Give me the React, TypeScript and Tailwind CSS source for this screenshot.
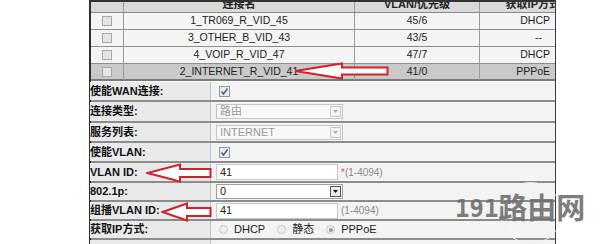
import React from "react";

const font = "font-['Liberation_Sans','Noto_Sans_CJK_SC',sans-serif]";

function Arrow({ w, h, head, shaft, className }: { w: number; h: number; head: number; shaft: number; className: string }) {
  const m = h / 2;
  const pts = [
    [1.5, m],
    [head, 1.5],
    [head, m - shaft / 2],
    [w - 1.5, m - shaft / 2],
    [w - 1.5, m + shaft / 2],
    [head, m + shaft / 2],
    [head, h - 1.5],
  ]
    .map((p) => p.join(","))
    .join(" ");
  return (
    <svg width={w} height={h} className={className} viewBox={`0 0 ${w} ${h}`}>
      <polygon points={pts} fill="#ffffff" stroke="#d0222a" strokeWidth="2" strokeLinejoin="miter" />
    </svg>
  );
}

function DisabledBox() {
  return <div className="w-[10px] h-[10px] border border-[#a8a8a8] bg-[#e4e4e4]" />;
}

function CheckBox() {
  return (
    <div className="w-[11px] h-[11px] border border-[#8f9aa8] bg-[#e8ecf2] flex items-center justify-center">
      <svg width="9" height="9" viewBox="0 0 9 9">
        <path d="M1.5 4.5 L3.5 7 L7.5 1.5" fill="none" stroke="#4a5a7a" strokeWidth="1.4" />
      </svg>
    </div>
  );
}

function Select({ value, enabled }: { value: string; enabled?: boolean }) {
  return (
    <div
      className={`w-[127px] h-[15px] border flex items-center justify-between pl-[3px] pr-[1px] ${
        enabled ? "border-[#a0a0a0] bg-white text-[#222]" : "border-[#c4c4c4] bg-[#f8f8f8] text-[#9a9a9a]"
      }`}
    >
      <span className="text-[11px] leading-none">{value}</span>
      <div
        className={`w-[11px] h-[11px] border flex items-center justify-center ${
          enabled ? "border-[#555] bg-[#eaeaea]" : "border-[#c8c8c8] bg-[#f4f4f4]"
        }`}
      >
        <svg width="5" height="3" viewBox="0 0 5 3">
          <path d="M0 0 L5 0 L2.5 3 Z" fill={enabled ? "#111" : "#aaa"} />
        </svg>
      </div>
    </div>
  );
}

function Input({ value }: { value: string }) {
  return (
    <div className="w-[122px] h-[16px] border border-[#c9c9c9] bg-white flex items-center pl-[3px] text-[11px] text-[#222]">
      {value}
    </div>
  );
}

function Radio({ on }: { on?: boolean }) {
  return (
    <div className="w-[9px] h-[9px] rounded-full border border-[#c8c8c8] bg-[#eeeeee] flex items-center justify-center">
      {on && <div className="w-[4px] h-[4px] rounded-full bg-[#9a9a9a]" />}
    </div>
  );
}

const topRows = [
  { name: "1_TR069_R_VID_45", vlan: "45/6", ip: "DHCP" },
  { name: "3_OTHER_B_VID_43", vlan: "43/5", ip: "--" },
  { name: "4_VOIP_R_VID_47", vlan: "47/7", ip: "DHCP" },
  { name: "2_INTERNET_R_VID_41", vlan: "41/0", ip: "PPPoE", sel: true },
];

function FormRow({ label, h, children }: { label: string; h: string; children?: React.ReactNode }) {
  return (
    <div className={`flex ${h} border-b-2 border-b-[#8c8c8c]`}>
      <div className="w-[121px] shrink-0 bg-[#e9e9e9] border-r border-r-[#c0c0c0] flex items-center text-[11px] font-bold text-[#111] whitespace-nowrap -ml-[1px]">
        {label}
      </div>
      <div className="flex-1 bg-[#f3f3f3] flex items-center pl-[5px] gap-[3px] text-[11px]">{children}</div>
    </div>
  );
}

export default function App() {
  return (
    <div className={`w-[600px] h-[244px] bg-white relative overflow-hidden ${font}`}>
      <div className="ml-[89px] w-[467px] border-l-2 border-l-[#2e2e2e] border-r border-r-[#3a3a3a] border-t-2 border-t-[#333]">
        {/* header */}
        <div className="grid grid-cols-[33px_231px_125px_76px] h-[11px] bg-[#d9d9d9] border-b border-b-[#8a8a8a] overflow-hidden">
          <div className="border-r border-r-[#9a9a9a]" />
          <div className="border-r border-r-[#9a9a9a] flex justify-center overflow-hidden">
            <span className="text-[11px] font-bold leading-[11px] -mt-[3px] text-[#222]">连接名</span>
          </div>
          <div className="border-r border-r-[#9a9a9a] flex justify-center overflow-hidden">
            <span className="text-[11px] font-bold leading-[11px] -mt-[3px] text-[#222]">VLAN/优先级</span>
          </div>
          <div className="flex justify-end overflow-hidden">
            <span className="text-[11px] font-bold leading-[11px] -mt-[3px] text-[#222] whitespace-nowrap -mr-[4px]">获取IP方式</span>
          </div>
        </div>
        {topRows.map((r, i) => (
          <div
            key={i}
            className={`grid grid-cols-[33px_231px_125px_76px] h-[17px] text-[10.5px] text-[#222] ${
              r.sel ? "bg-[#c9c9c9] border-b-2 border-b-[#7a7a7a]" : "bg-[#f4f4f4] border-b border-b-[#8f8f8f]"
            }`}
          >
            <div className="border-r border-r-[#9a9a9a] flex items-center justify-center">
              <DisabledBox />
            </div>
            <div className="border-r border-r-[#9a9a9a] flex items-center justify-center">{r.name}</div>
            <div className="border-r border-r-[#9a9a9a] flex items-center justify-center">{r.vlan}</div>
            <div className={`flex items-center justify-end ${r.ip === "--" ? "pr-[14px]" : "pr-[6px]"}`}>{r.ip}</div>
          </div>
        ))}
        <div className="h-[1px] bg-white" />
        {/* form */}
        <FormRow label="使能WAN连接:" h="h-[20px]">
          <div className="ml-[3px]">
            <CheckBox />
          </div>
        </FormRow>
        <FormRow label="连接类型:" h="h-[21px]">
          <Select value="路由" />
        </FormRow>
        <FormRow label="服务列表:" h="h-[20px]">
          <Select value="INTERNET" />
        </FormRow>
        <FormRow label="使能VLAN:" h="h-[20px]">
          <div className="ml-[3px]">
            <CheckBox />
          </div>
        </FormRow>
        <FormRow label="VLAN ID:" h="h-[20px]">
          <Input value="41" />
          <span className="text-[10px] text-[#8a8a8a]">
            <span className="text-[#e05050]">*</span>(1-4094)
          </span>
        </FormRow>
        <FormRow label="802.1p:" h="h-[19px]">
          <Select value="0" enabled />
        </FormRow>
        <FormRow label="组播VLAN ID:" h="h-[19px]">
          <Input value="41" />
          <span className="text-[10px] text-[#8a8a8a]">(1-4094)</span>
        </FormRow>
        <FormRow label="获取IP方式:" h="h-[19px]">
          <div className="flex items-center gap-[6px] ml-[3px] text-[11px] text-[#222]">
            <Radio />
            <span className="mr-[6px]">DHCP</span>
            <Radio />
            <span className="mr-[6px]">静态</span>
            <Radio on />
            <span>PPPoE</span>
          </div>
        </FormRow>
        <FormRow label="" h="h-[20px]" />
      </div>

      {/* arrows */}
      <Arrow w={95} h={18} head={48} shaft={7} className="absolute left-[294px] top-[62px]" />
      <Arrow w={66} h={20} head={34} shaft={8} className="absolute left-[146px] top-[163px]" />
      <Arrow w={51} h={20} head={26} shaft={8} className="absolute left-[161px] top-[202px]" />

      {/* watermark */}
      <div className="absolute left-[500px] top-[182px] w-[62px] h-[62px] rounded-full border border-[#efefef]" />
      <div className="absolute left-[455px] top-[188px] flex items-end text-[#707070] opacity-90">
        <span className="font-['DejaVu_Sans_Mono',monospace] font-bold text-[24px] leading-[30px]">191</span>
        <span className="font-['Noto_Sans_CJK_SC',sans-serif] font-bold text-[29px] leading-[36px]">路由网</span>
      </div>
    </div>
  );
}
